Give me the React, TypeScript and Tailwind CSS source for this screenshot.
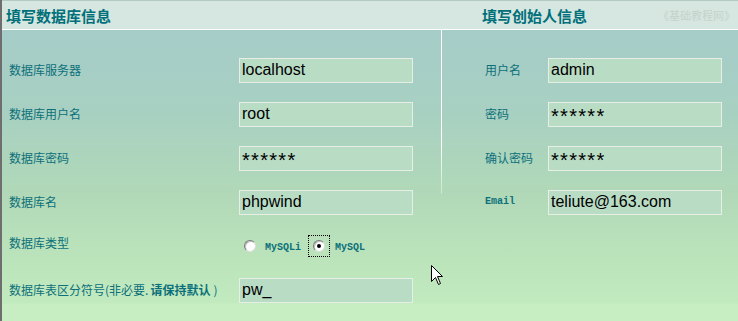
import React from "react";

const cjk = { fontFamily: '"Noto Sans CJK SC", "Liberation Sans", sans-serif' };
const sans = { fontFamily: '"Liberation Sans", Arial, sans-serif' };
const mono = { fontFamily: '"Liberation Mono", "Courier New", monospace' };

function Input({ value, pw }: { value: string; pw?: boolean }) {
  return (
    <div className="w-[174px] h-[25px] border border-[#e6eee6] bg-[#b9dcc5] flex items-center pl-[2px] overflow-hidden">
      {pw ? (
        <span className="text-[20px] leading-[20px] h-[20px] text-black tracking-[1.3px] translate-y-[2px]" style={sans}>
          {value}
        </span>
      ) : (
        <span className="text-[16px] leading-none text-black" style={sans}>
          {value}
        </span>
      )}
    </div>
  );
}

function LeftRow({ label, children }: { label: React.ReactNode; children: React.ReactNode }) {
  return (
    <div className="flex items-center h-[44px] pl-[7px]">
      <div className="w-[230px] text-[12px] leading-none text-[#0c707a]" style={cjk}>
        {label}
      </div>
      {children}
    </div>
  );
}

function RightRow({ label, children, monoLabel }: { label: string; children: React.ReactNode; monoLabel?: boolean }) {
  return (
    <div className="flex items-center h-[44px] pl-[43px]">
      <div
        className={monoLabel ? "w-[63px] text-[10px] font-bold leading-none text-[#0c707a]" : "w-[63px] text-[12px] leading-none text-[#0c707a]"}
        style={monoLabel ? { fontFamily: '"Liberation Mono", "DejaVu Sans Mono", monospace' } : cjk}
      >
        {label}
      </div>
      {children}
    </div>
  );
}

function Radio({ checked }: { checked?: boolean }) {
  return (
    <span className="relative inline-block w-[12px] h-[12px] rounded-full bg-white border border-t-[#7a7a7a] border-l-[#7a7a7a] border-r-[#dcdcdc] border-b-[#dcdcdc] shadow-[inset_1px_1px_0_#c0c0c0]">
      {checked && <span className="absolute left-[3px] top-[3px] w-[4px] h-[4px] rounded-full bg-black" />}
    </span>
  );
}

export default function App() {
  return (
    <div
      className="relative w-[738px] h-[321px] overflow-hidden border-l-2 border-[#6e6e6e] bg-[linear-gradient(to_bottom,#a6ccc8_0px,#a6ccc8_30px,#a8d0c2_110px,#b0d8b8_190px,#bce4bb_260px,#c2eabf_303px,#c6eec2_304px,#c6eec2_321px)]"
    >
      {/* header */}
      <div className="flex items-center h-[30px] border-t border-[#b2cac2] border-b border-b-white bg-[#d6e6e0]">
        <div className="w-[480px] pl-[4px] text-[15px] font-bold leading-none text-[#00707a]" style={cjk}>
          填写数据库信息
        </div>
        <div className="text-[15px] font-bold leading-none text-[#00707a]" style={cjk}>
          填写创始人信息
        </div>
        <div className="ml-auto pr-[3px] text-[11px] leading-none text-[#c4d4cc]" style={cjk}>
          《基础教程网》
        </div>
      </div>

      {/* body */}
      <div className="flex">
        <div className="w-[439px] pt-[18px]">
          <LeftRow label="数据库服务器">
            <Input value="localhost" />
          </LeftRow>
          <LeftRow label="数据库用户名">
            <Input value="root" />
          </LeftRow>
          <LeftRow label="数据库密码">
            <Input value="******" pw />
          </LeftRow>
          <LeftRow label="数据库名">
            <Input value="phpwind" />
          </LeftRow>
          <div className="flex items-center h-[44px] pl-[7px]">
            <div className="w-[230px] text-[12px] leading-none text-[#0c707a] -mt-[6px]" style={cjk}>
              数据库类型
            </div>
            <div className="flex items-center pl-[5px]">
              <Radio />
              <span className="ml-[9px] text-[10px] font-bold leading-none text-[#0c707a] pt-[4px]" style={mono}>
                MySQLi
              </span>
              <span className="ml-[7px] w-[22px] h-[22px] border border-dotted border-black flex items-center justify-center">
                <Radio checked />
              </span>
              <span className="ml-[5px] text-[10px] font-bold leading-none text-[#0c707a] pt-[4px]" style={mono}>
                MySQL
              </span>
            </div>
          </div>
          <LeftRow
            label={
              <span>
                数据库表区分符号(非必要.<b className="font-bold ml-[2px]">请保持默认</b>
                <span className="ml-[3px]">)</span>
              </span>
            }
          >
            <Input value="pw_" />
          </LeftRow>
        </div>

        <div className="w-px h-[164px] bg-[linear-gradient(to_bottom,#ffffff,#ffffff_70%,rgba(255,255,255,0.35))]" />

        <div className="flex-1 pt-[18px]">
          <RightRow label="用户名">
            <Input value="admin" />
          </RightRow>
          <RightRow label="密码">
            <Input value="******" pw />
          </RightRow>
          <RightRow label="确认密码">
            <Input value="******" pw />
          </RightRow>
          <RightRow label="Email" monoLabel>
            <Input value="teliute@163.com" />
          </RightRow>
        </div>
      </div>

      {/* mouse cursor */}
      <svg className="absolute left-[429px] top-[265px]" width="13" height="22" viewBox="0 0 13 22">
        <path
          d="M0.5 0.5 L0.5 16.5 L4.5 12.5 L7.5 19.5 L9.5 18.5 L6.5 11.5 L11.5 11.5 Z"
          fill="#ffffff"
          stroke="#000000"
          strokeWidth="1"
          strokeLinejoin="miter"
        />
      </svg>
    </div>
  );
}
